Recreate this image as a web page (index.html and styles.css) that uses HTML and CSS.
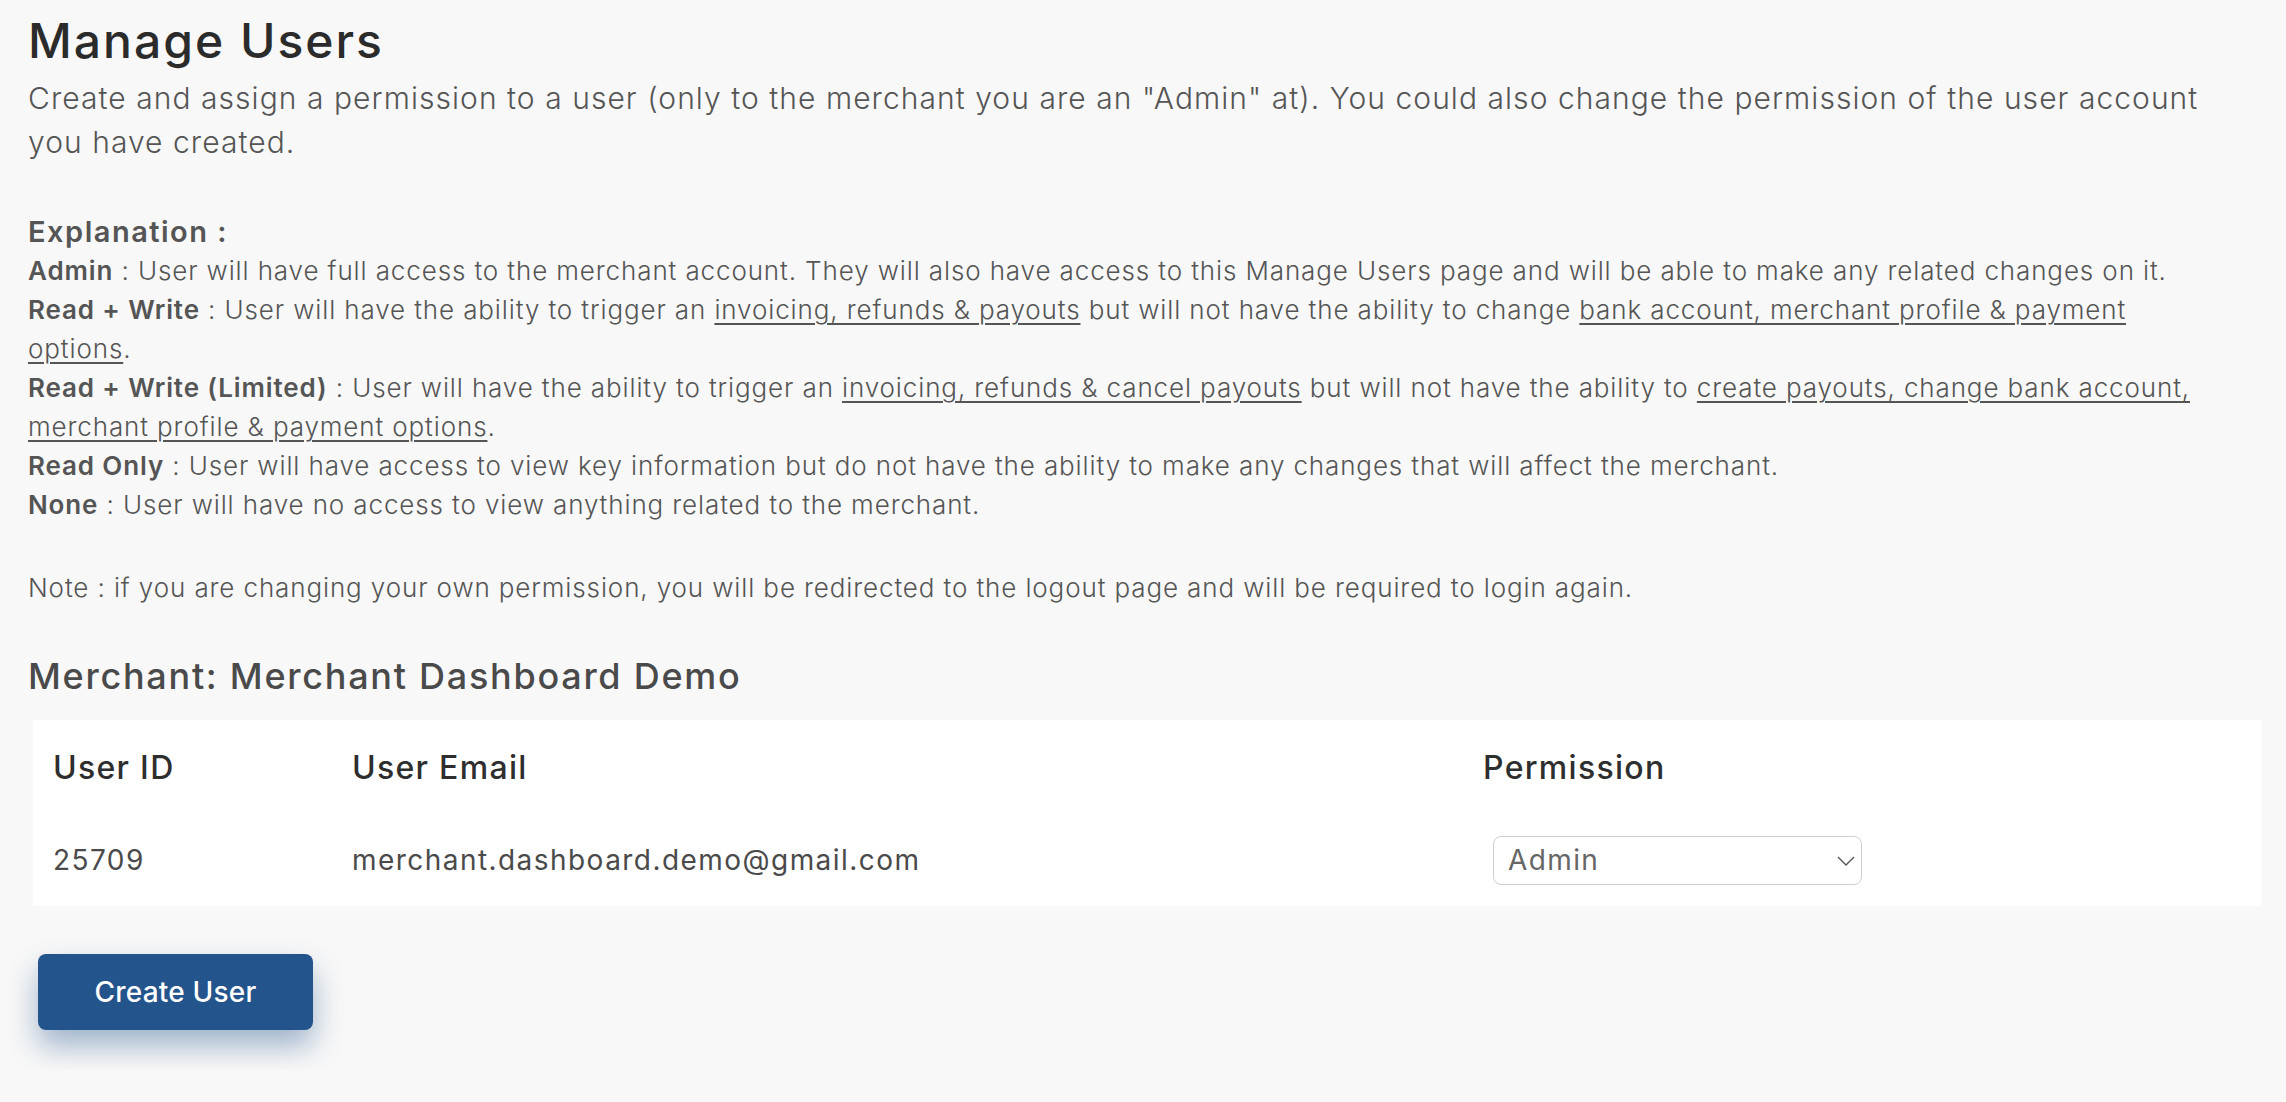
FILE: index.html
```html
<!DOCTYPE html>
<html lang="en">
<head>
<meta charset="utf-8">
<title>Manage Users</title>
<link rel="stylesheet" href="styles.css">
</head>
<body>
<div class="page">
  <h1 class="title">Manage Users</h1>
  <div class="intro">
    <p class="lead">Create and assign a permission to a user (only to the merchant you are an "Admin" at). You could also change the permission of the user account you have created.</p>
    <section class="explain">
      <h3 class="explain-title">Explanation :</h3>
      <p class="perm"><b>Admin</b> : User will have full access to the merchant account. They will also have access to this Manage Users page and will be able to make any related changes on it.</p>
      <p class="perm"><b>Read + Write</b> : User will have the ability to trigger an <u>invoicing, refunds &amp; payouts</u> but will not have the ability to change <u>bank account, merchant profile &amp; payment options</u>.</p>
      <p class="perm"><b>Read + Write (Limited)</b> : User will have the ability to trigger an <u>invoicing, refunds &amp; cancel payouts</u> but will not have the ability to <u>create payouts, change bank account, merchant profile &amp; payment options</u>.</p>
      <p class="perm"><b>Read Only</b> : User will have access to view key information but do not have the ability to make any changes that will affect the merchant.</p>
      <p class="perm"><b>None</b> : User will have no access to view anything related to the merchant.</p>
    </section>
    <p class="note">Note : if you are changing your own permission, you will be redirected to the logout page and will be required to login again.</p>
  </div>
  <h2 class="merchant">Merchant: Merchant Dashboard Demo</h2>
  <div class="table-wrap">
    <table class="users">
      <thead>
        <tr><th class="c-id">User ID</th><th class="c-email">User Email</th><th class="c-perm">Permission</th></tr>
      </thead>
      <tbody>
        <tr>
          <td class="c-id">25709</td>
          <td class="c-email">merchant.dashboard.demo@gmail.com</td>
          <td class="c-perm">
            <div class="select-wrap">
              <select class="perm-select">
                <option selected>Admin</option>
                <option>Read + Write</option>
                <option>Read + Write (Limited)</option>
                <option>Read Only</option>
                <option>None</option>
              </select>
              <svg class="chev" width="18" height="10" viewBox="0 0 18 10"><path d="M1 1l8 8 8-8" fill="none" stroke="#555" stroke-width="1.4"/></svg>
            </div>
          </td>
        </tr>
      </tbody>
    </table>
  </div>
  <button class="btn-create">Create User</button>
</div>
</body>
</html>
```
FILE: styles.css
```css
html, body { margin: 0; padding: 0; }
body {
  background: #f8f8f8;
  font-family: "Inter", "Noto Sans", sans-serif;
  color: #555;
}
.page { padding: 0 25px 40px 28px; }
.intro { padding-right: 46px; }
.title {
  margin: 0;
  padding-top: 12px;
  font-size: 48px;
  font-weight: 500;
  line-height: 58px;
  letter-spacing: 2px;
  color: #2b2b2b;
}
.lead {
  margin: 6px 0 0;
  font-size: 30px;
  font-weight: 300;
  line-height: 44px;
  letter-spacing: 1.05px;
  color: #555;
}
.explain { margin-top: 48px; }
.explain-title {
  margin: 0;
  font-size: 29px;
  font-weight: 600;
  line-height: 39px;
  letter-spacing: 1.5px;
  color: #555;
}
.perm {
  margin: 0;
  font-size: 26px;
  font-weight: 300;
  line-height: 39px;
  letter-spacing: 0.88px;
}
.perm b { font-weight: 600; }
.perm u { text-underline-offset: 4px; text-decoration-thickness: 1.5px; }
.note {
  margin: 44px 0 0;
  font-size: 26px;
  font-weight: 300;
  line-height: 39px;
  letter-spacing: 0.88px;
}
.merchant {
  margin: 47px 0 0;
  font-size: 36px;
  font-weight: 500;
  line-height: 44px;
  letter-spacing: 1.73px;
  color: #4a4a4a;
}
.table-wrap { margin: 22px 0 0 5px; background: #fff; }
.users { width: 100%; border-collapse: collapse; }
.users th {
  text-align: left;
  font-size: 32px;
  font-weight: 500;
  letter-spacing: 1.3px;
  color: #2e2e2e;
  height: 94px;
  padding: 0 20px;
  vertical-align: middle;
}
.users td {
  font-size: 28px;
  font-weight: 400;
  letter-spacing: 1.45px;
  color: #4a4a4a;
  height: 92px;
  padding: 0 20px;
  vertical-align: middle;
}
.users .c-id { width: 259px; }
.users .c-email { width: 1091px; }
.select-wrap { position: relative; width: 369px; margin-left: 10px; }
.perm-select {
  appearance: none;
  -webkit-appearance: none;
  width: 369px;
  height: 49px;
  border: 1px solid #cfcfcf;
  border-radius: 8px;
  background: #fff;
  font-family: inherit;
  font-size: 28px;
  font-weight: 400;
  letter-spacing: 1.4px;
  color: #666;
  padding: 0 14px;
}
.chev { position: absolute; right: 7px; top: 20px; }
.btn-create {
  margin: 48px 0 0 10px;
  width: 275px;
  height: 76px;
  border: none;
  border-radius: 8px;
  background: #24548c;
  color: #fff;
  font-family: inherit;
  font-size: 28px;
  font-weight: 500;
  letter-spacing: 0.2px;
  box-shadow: 0 16px 30px rgba(36, 84, 140, 0.42);
}
```
